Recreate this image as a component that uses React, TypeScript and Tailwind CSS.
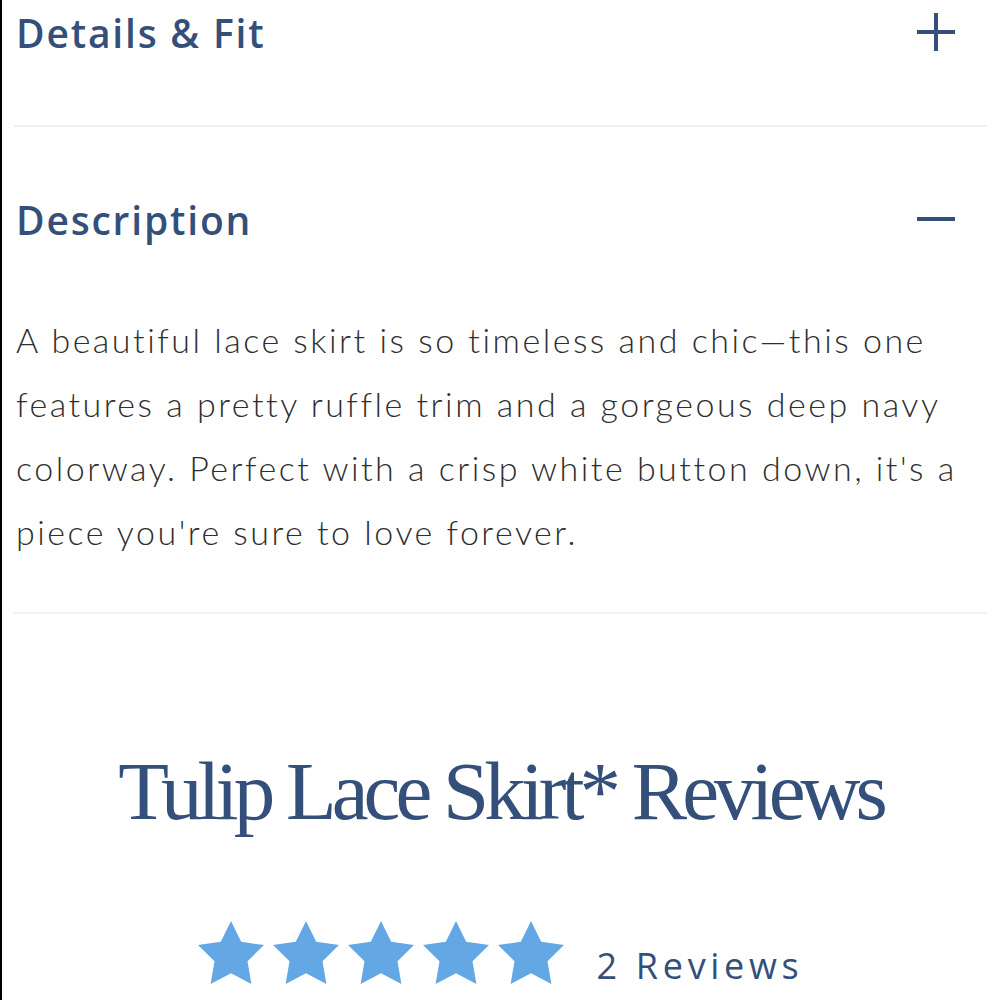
import React from "react";

const navy = "text-[#34507a]";

const Star = () => (
  <svg viewBox="2 2 20 19.02" className="w-[66px] h-[63px]" fill="#63a7e4">
    <polygon points="12,2 15.09,8.26 22,9.27 17,14.14 18.18,21.02 12,17.77 5.82,21.02 7,14.14 2,9.27 8.91,8.26" />
  </svg>
);

// Plus / minus toggle drawn with two bars
const Toggle = ({ open }: { open: boolean }) => (
  <span className="relative block w-[38px] h-[38px] mr-[32px]">
    <span className="absolute left-0 top-[17px] w-[38px] h-[4px] bg-[#34507a]" />
    {!open && <span className="absolute top-0 left-[17px] w-[4px] h-[38px] bg-[#34507a]" />}
  </span>
);

export default function App() {
  return (
    <div className="min-h-[1000px] bg-white border-l-2 border-black pl-3 pr-[13px] font-['Lato',sans-serif] overflow-hidden">
      {/* Details & Fit (collapsed) */}
      <div className="h-[127px] border-b-2 border-[#f1f1f1]">
        <div className="flex items-center justify-between h-[64px]">
          <h3 className={`pl-[2px] font-['Open_Sans',sans-serif] font-semibold text-[39px] leading-none tracking-[1.8px] ${navy}`}>
            Details &amp; Fit
          </h3>
          <Toggle open={false} />
        </div>
      </div>

      {/* Description (open) */}
      <div className="border-b-2 border-[#f1f1f1] pt-[60px] pb-[48px]">
        <div className="flex items-center justify-between h-[64px]">
          <h3 className={`pl-[2px] font-['Open_Sans',sans-serif] font-semibold text-[39px] leading-none tracking-[1.8px] ${navy}`}>
            Description
          </h3>
          <Toggle open />
        </div>
        <p className="mt-[57px] pl-[2px] text-[34px] font-light leading-[64px] tracking-[2.5px] text-[#2e2e2e] whitespace-nowrap">
          A beautiful lace skirt is so timeless and chic—this one
          <br />
          features a pretty ruffle trim and a gorgeous deep navy
          <br />
          colorway. Perfect with a crisp white button down, it's a
          <br />
          piece you're sure to love forever.
        </p>
      </div>

      {/* Reviews header */}
      <div className="pt-[136px] flex flex-col items-center">
        <h2 className={`font-['Liberation_Serif',serif] text-[83px] leading-none tracking-[-0.06em] ${navy}`}>
          Tulip Lace Skirt* Reviews
        </h2>
        <div className="mt-[88px] flex items-end">
          <div className="flex gap-[9px]">
            <Star />
            <Star />
            <Star />
            <Star />
            <Star />
          </div>
          <span className={`ml-[33px] font-['Open_Sans',sans-serif] font-medium text-[36px] leading-none tracking-[0.13em] ${navy}`}>
            2 Reviews
          </span>
        </div>
      </div>
    </div>
  );
}
